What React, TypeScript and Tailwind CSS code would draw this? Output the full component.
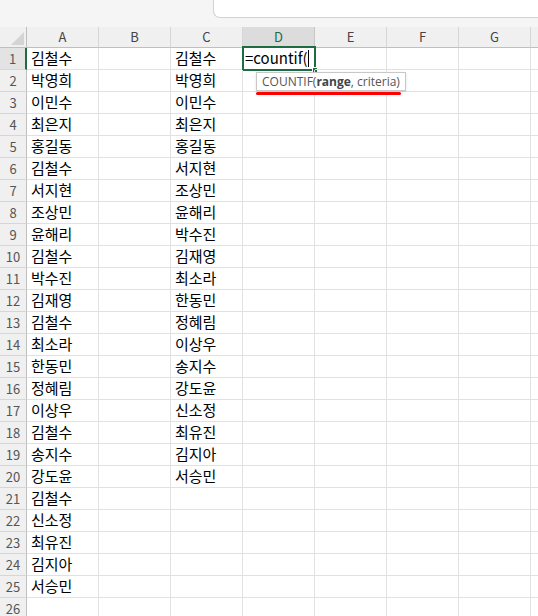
const colA = [
  '김철수', '박영희', '이민수', '최은지', '홍길동', '김철수', '서지현', '조상민', '윤해리', '김철수',
  '박수진', '김재영', '김철수', '최소라', '한동민', '정혜림', '이상우', '김철수', '송지수', '강도윤',
  '김철수', '신소정', '최유진', '김지아', '서승민',
];

const colC = [
  '김철수', '박영희', '이민수', '최은지', '홍길동', '서지현', '조상민', '윤해리', '박수진', '김재영',
  '최소라', '한동민', '정혜림', '이상우', '송지수', '강도윤', '신소정', '최유진', '김지아', '서승민',
];

const letters = ['A', 'B', 'C', 'D', 'E', 'F', 'G', 'H'];
const rows = Array.from({ length: 26 }, (_, i) => i + 1);

function ActiveCell() {
  return (
    <>
      {/* green selection frame */}
      <div className="absolute -left-[1px] -top-[2px] w-[74px] h-[25px] border-2 border-[#1e6c41] pointer-events-none" />
      <div className="absolute left-[69px] top-[19px] w-[6px] h-[6px] bg-[#1e6c41] border border-white" />
      <div className="absolute left-[2px] top-0 h-full flex items-center text-[15px] text-black">
        <span>=countif(</span>
        <span className="w-px h-[17px] bg-black" />
      </div>
      {/* argument hint */}
      <div className="absolute left-[13px] top-[24px] z-10 h-[19px] px-[5px] flex items-center bg-white border border-[#c8c8c8] shadow-sm whitespace-nowrap text-[12px] text-[#555] font-['Open_Sans',sans-serif]">
        COUNTIF(<b className="font-bold text-[#444]">range</b>, criteria)
      </div>
      <div className="absolute left-[13px] top-[44px] z-10 w-[145px] h-[3px] rounded-full bg-[#ff0000]" />
    </>
  );
}

export default function App() {
  return (
    <div className="w-[538px] h-[616px] overflow-hidden bg-white font-['Noto_Sans_CJK_KR','Noto_Sans',sans-serif]">
      {/* name box / formula area strip */}
      <div className="h-[27px] bg-[#f5f5f5] flex justify-end">
        <div className="w-[325px] h-[18px] bg-white border-l border-b border-[#d2d2d2] rounded-bl-[7px]" />
      </div>

      <div className="grid grid-cols-[27px_repeat(8,72px)]">
        {/* column headers */}
        <div className="h-[21px] bg-[#f0f0f0] border-r border-b border-[#bfbfbf] flex items-end justify-end pr-[2px] pb-[2px]">
          <svg width="13" height="13" viewBox="0 0 13 13">
            <polygon points="13,0 13,13 0,13" fill="#d4d4d4" />
          </svg>
        </div>
        {letters.map((l) => (
          <div
            key={l}
            className={
              l === 'D'
                ? 'h-[21px] bg-[#dcdcdc] border-r border-[#c6c6c6] border-b-2 border-b-[#1e6c41] flex items-center justify-center text-[13px] text-[#1e6c41]'
                : 'h-[21px] bg-[#f0f0f0] border-r border-b border-r-[#d6d6d6] border-b-[#bfbfbf] flex items-center justify-center text-[13px] text-[#444]'
            }
          >
            {l}
          </div>
        ))}

        {rows.map((r) => (
          <div key={r} className="contents">
            <div
              className={
                r === 1
                  ? 'h-[22px] bg-[#e3e3e3] border-r-2 border-r-[#1e6c41] border-b border-b-[#d6d6d6] flex items-center justify-center text-[13px] text-[#555]'
                  : 'h-[22px] bg-[#f0f0f0] border-r border-b border-r-[#bfbfbf] border-b-[#d6d6d6] flex items-center justify-center text-[13px] text-[#555]'
              }
            >
              {r}
            </div>
            {letters.map((l) => (
              <div
                key={l}
                className="relative h-[22px] border-r border-b border-[#e1e1e1] pl-[4px] flex items-center text-[15px] text-black whitespace-nowrap"
              >
                {l === 'A' && colA[r - 1]}
                {l === 'C' && colC[r - 1]}
                {l === 'D' && r === 1 && <ActiveCell />}
              </div>
            ))}
          </div>
        ))}
      </div>
    </div>
  );
}
